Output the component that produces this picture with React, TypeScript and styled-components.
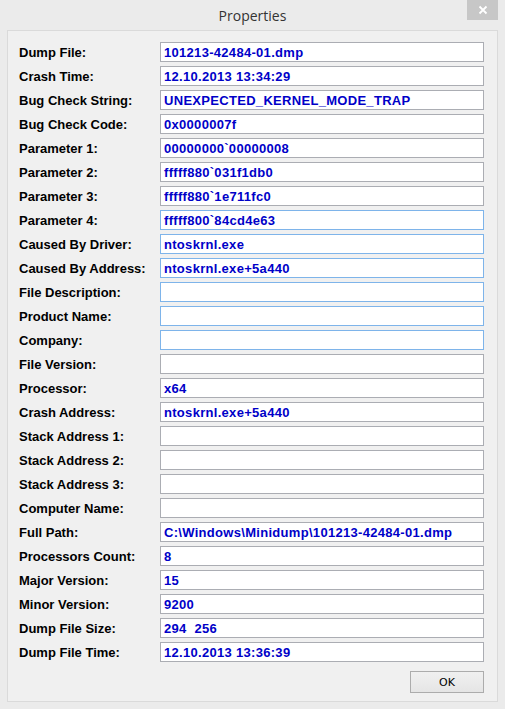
import styled, { createGlobalStyle } from "styled-components";
import { Fragment } from "react";

// Rows of the dump properties; "hot" rows get the blue hover border
const rows: { label: string; value: string; hot?: boolean }[] = [
    { label: "Dump File:", value: "101213-42484-01.dmp" },
    { label: "Crash Time:", value: "12.10.2013 13:34:29" },
    { label: "Bug Check String:", value: "UNEXPECTED_KERNEL_MODE_TRAP" },
    { label: "Bug Check Code:", value: "0x0000007f" },
    { label: "Parameter 1:", value: "00000000`00000008" },
    { label: "Parameter 2:", value: "fffff880`031f1db0" },
    { label: "Parameter 3:", value: "fffff880`1e711fc0" },
    { label: "Parameter 4:", value: "fffff800`84cd4e63", hot: true },
    { label: "Caused By Driver:", value: "ntoskrnl.exe", hot: true },
    { label: "Caused By Address:", value: "ntoskrnl.exe+5a440", hot: true },
    { label: "File Description:", value: "", hot: true },
    { label: "Product Name:", value: "", hot: true },
    { label: "Company:", value: "", hot: true },
    { label: "File Version:", value: "" },
    { label: "Processor:", value: "x64" },
    { label: "Crash Address:", value: "ntoskrnl.exe+5a440" },
    { label: "Stack Address 1:", value: "" },
    { label: "Stack Address 2:", value: "" },
    { label: "Stack Address 3:", value: "" },
    { label: "Computer Name:", value: "" },
    { label: "Full Path:", value: "C:\\Windows\\Minidump\\101213-42484-01.dmp" },
    { label: "Processors Count:", value: "8" },
    { label: "Major Version:", value: "15" },
    { label: "Minor Version:", value: "9200" },
    { label: "Dump File Size:", value: "294  256" },
    { label: "Dump File Time:", value: "12.10.2013 13:36:39" },
];

const GlobalStyle = createGlobalStyle`
    html, body {
        margin: 0;
        padding: 0;
        background: #ebebeb;
    }
    * {
        box-sizing: border-box;
    }
`;

const Window = styled.div`
    width: 505px;
    height: 709px;
    background: #ebebeb;
    display: flex;
    flex-direction: column;
    padding: 0 7px 7px 7px;
    font-family: "Liberation Sans", Arial, sans-serif;
`;

const TitleBar = styled.div`
    height: 30px;
    flex-shrink: 0;
    position: relative;
    display: flex;
    align-items: center;
    justify-content: center;
`;

const Title = styled.span`
    font-family: "Open Sans", "Noto Sans", sans-serif;
    font-size: 14px;
    color: #333333;
    margin-top: 1px;
`;

const CloseButton = styled.div`
    position: absolute;
    top: 0;
    right: 0;
    width: 31px;
    height: 20px;
    background: #c7c7c7;
    display: flex;
    align-items: center;
    justify-content: center;
`;

const Client = styled.div`
    flex: 1;
    min-height: 0;
    background: #f0f0f0;
    border: 1px solid #dadada;
    display: flex;
    flex-direction: column;
    padding: 11px 13px 8px 11px;
`;

const Grid = styled.div`
    display: grid;
    grid-template-columns: 141px 324px;
    grid-auto-rows: 20px;
    row-gap: 4px;
`;

const Label = styled.div`
    font-size: 13px;
    font-weight: bold;
    color: #000;
    display: flex;
    align-items: center;
    height: 20px;
    padding-top: 1px;
    white-space: nowrap;
`;

const Field = styled.div<{ $hot?: boolean }>`
    height: 20px;
    background: #fff;
    border: 1px solid ${({ $hot }) => ($hot ? "#7eb4ea" : "#abadb3")};
    display: flex;
    align-items: center;
    padding: 1px 3px 0 3px;
    font-size: 13px;
    font-weight: bold;
    letter-spacing: 0.3px;
    color: #0000c8;
    white-space: pre;
    overflow: hidden;
`;

const Footer = styled.div`
    display: flex;
    justify-content: flex-end;
    margin-top: auto;
`;

const OkButton = styled.button`
    width: 74px;
    height: 22px;
    border: 1px solid #acacac;
    background: linear-gradient(#f0f0f0, #e5e5e5);
    font-family: "DejaVu Sans", sans-serif;
    font-size: 11px;
    color: #000;
    padding: 0;
    border-radius: 0;
`;

export default function App() {
    return (
        <>
            <GlobalStyle />
            <Window>
                <TitleBar>
                    <Title>Properties</Title>
                    <CloseButton>
                        <svg width="10" height="10" viewBox="0 0 10 10">
                            <path d="M1.5 1.5 L8.5 8.5 M8.5 1.5 L1.5 8.5" stroke="#fff" strokeWidth="1.8" />
                        </svg>
                    </CloseButton>
                </TitleBar>
                <Client>
                    <Grid>
                        {rows.map((r) => (
                            <Fragment key={r.label}>
                                <Label>{r.label}</Label>
                                <Field $hot={r.hot}>{r.value}</Field>
                            </Fragment>
                        ))}
                    </Grid>
                    <Footer>
                        <OkButton>OK</OkButton>
                    </Footer>
                </Client>
            </Window>
        </>
    );
}
